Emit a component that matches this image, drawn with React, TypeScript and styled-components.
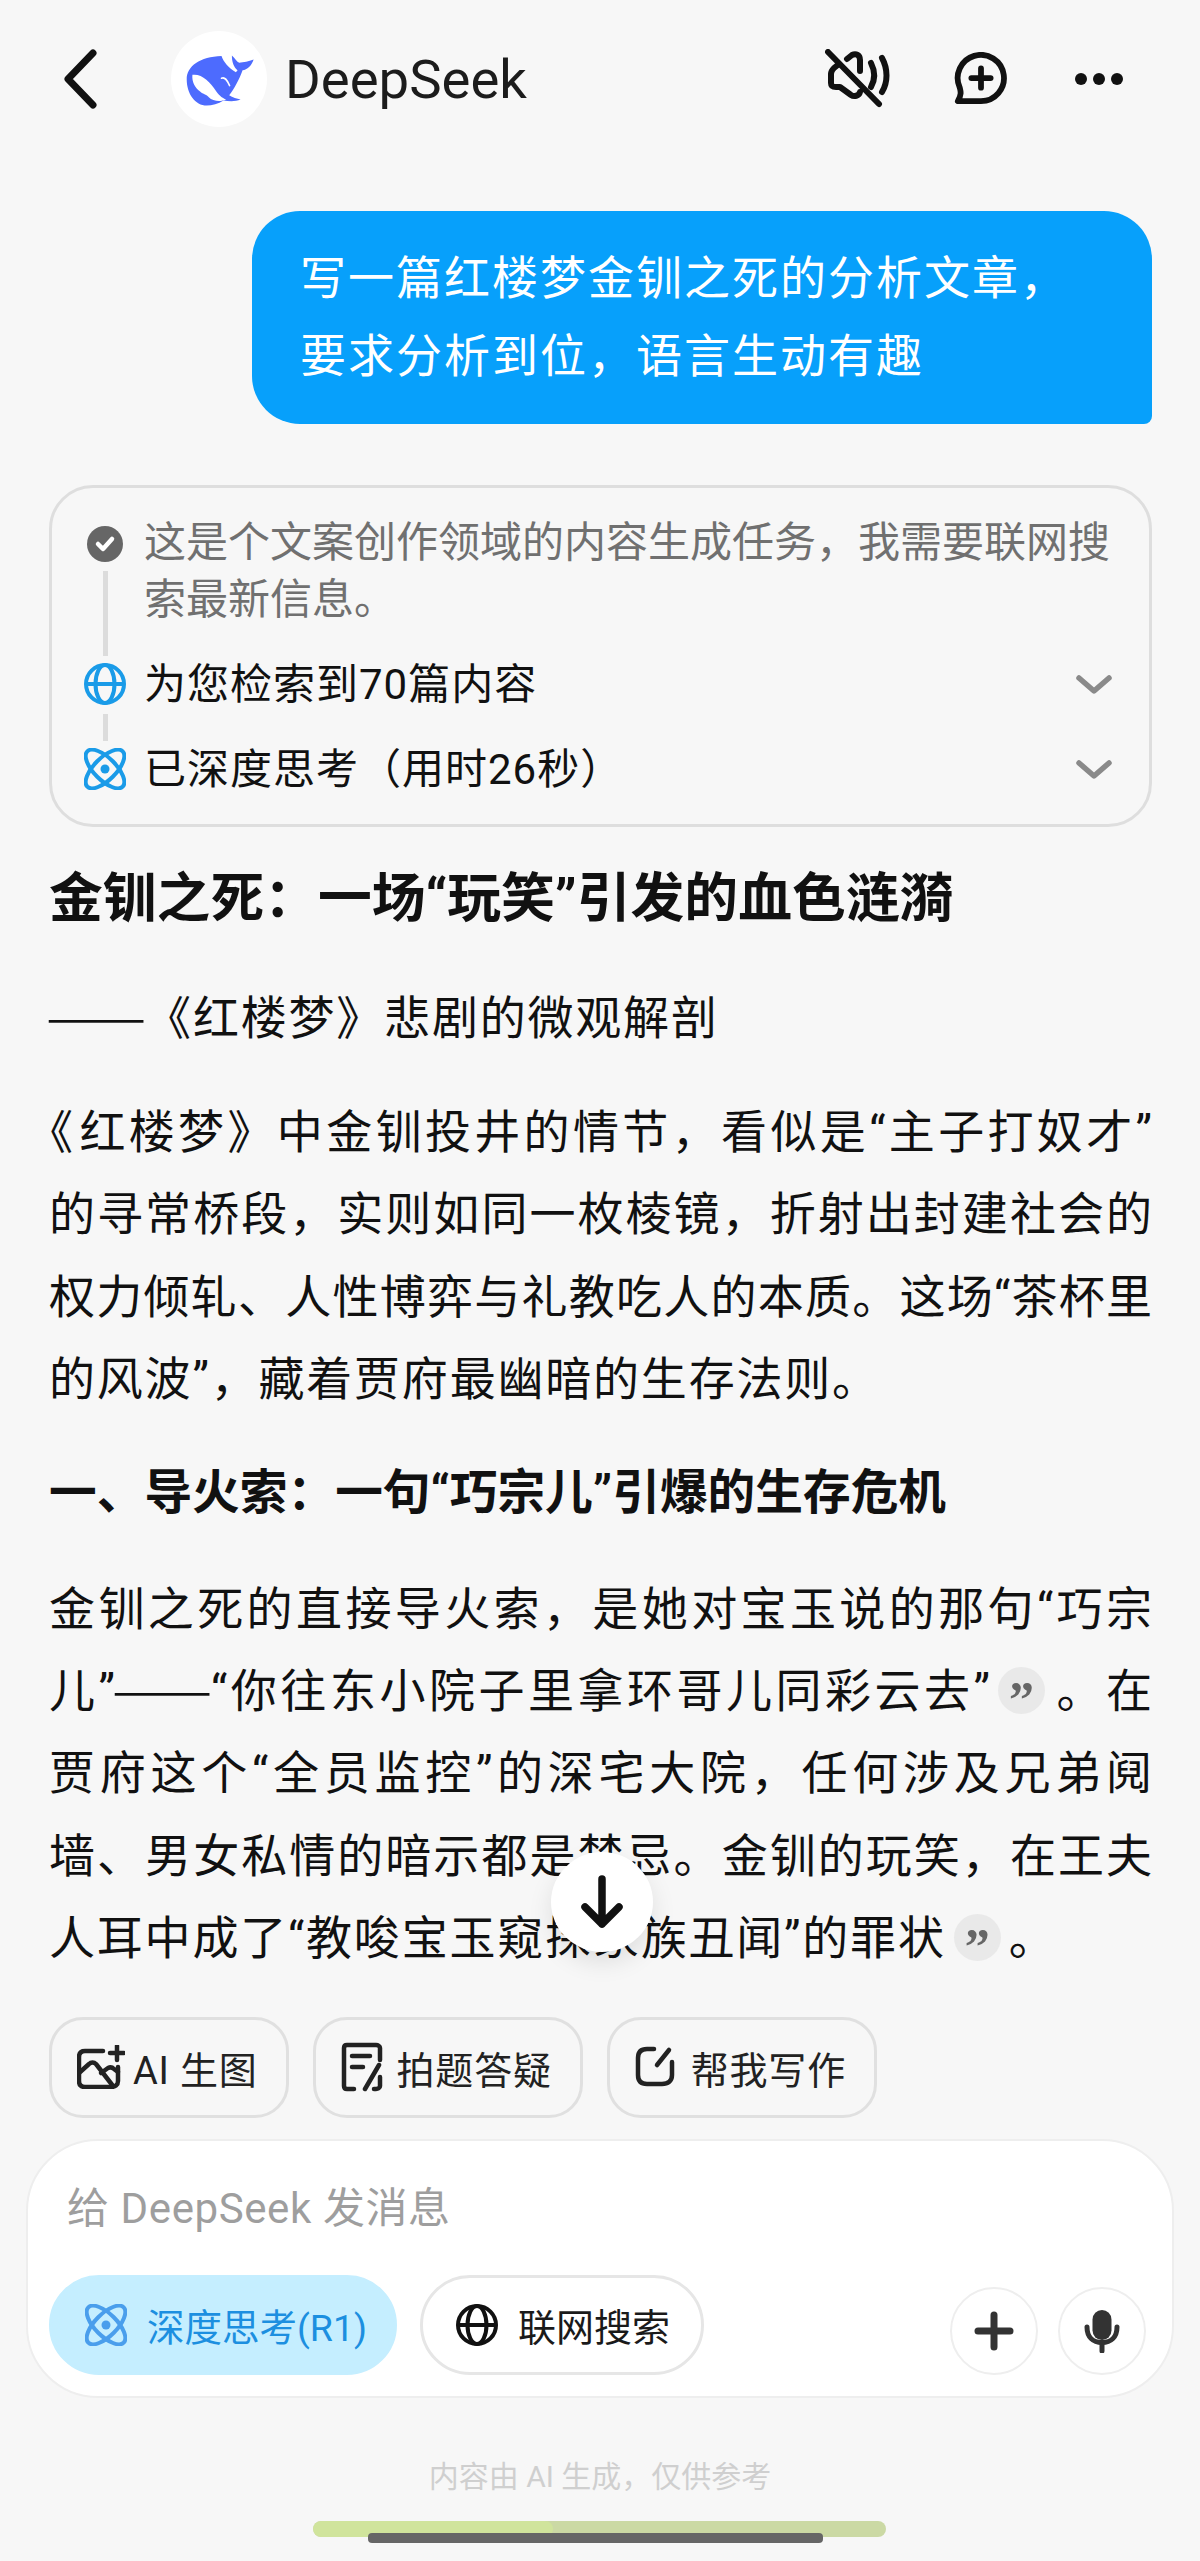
import React from "react";
import styled, { createGlobalStyle } from "styled-components";

const GlobalStyle = createGlobalStyle`
  html, body {
    margin: 0;
    padding: 0;
    background: #f7f7f7;
  }
  body {
    font-family: Roboto, "Noto Sans CJK SC", sans-serif;
    color: #111;
  }
  * {
    box-sizing: border-box;
  }
`;

function WhaleLogo() {
  return (
    <svg width="96" height="96" viewBox="333 33 287 287">
      <path
        fill="#4d6bfe"
        d="M380 178C380 138 420 110 484 108C490 125 505 145 527 156L532 150C520 140 515 125 515 106C525 115 530 125 537 128C550 125 565 125 580 118C575 135 560 150 547 150C537 178 522 205 507 225C517 232 530 235 541 238C525 245 505 243 490 241C475 251 455 256 440 256C405 256 380 220 380 178Z"
      />
      <path
        fill="#fff"
        d="M397 164C425 160 450 185 468 213C478 228 490 235 498 238C480 246 458 243 446 231C442 224 428 222 420 214C404 203 395 184 397 164Z"
      />
      <path fill="none" stroke="#fff" strokeWidth="5" strokeLinecap="round" d="M484 174C494 170 500 178 508 196" />
    </svg>
  );
}

function BackIcon() {
  return (
    <svg width="40" height="62" viewBox="0 0 40 62" fill="none">
      <path d="M33 5L8 31L33 57" stroke="#111" strokeWidth="7" strokeLinecap="round" strokeLinejoin="round" />
    </svg>
  );
}

function MuteIcon() {
  return (
    <svg width="68" height="60" viewBox="0 0 68 60" fill="none" stroke="#111" strokeWidth="6" strokeLinecap="round" strokeLinejoin="round">
      <path d="M14 15L9 19C7 21 6 23 6 25V34C6 37 8 38 11 38H15L26 46C29 48 34 47 35 43" />
      <path d="M22 10L27 6C31 4 35 6 35 11V22" />
      <path d="M46 14C50 22 50 31 46 38" />
      <path d="M57 9C63 20 63 33 57 43" />
      <path d="M3 3L54 55" />
    </svg>
  );
}

function ChatPlusIcon() {
  return (
    <svg width="54" height="54" viewBox="0 0 56 56" fill="none" stroke="#111" strokeLinecap="round" strokeLinejoin="round">
      <path strokeWidth="6" d="M4 51H28A24 24 0 1 0 6 37C7 41 8 44 4 51Z" />
      <path strokeWidth="6" d="M18 27H38M28 17V37" />
    </svg>
  );
}

function DotsIcon() {
  return (
    <svg width="50" height="14" viewBox="0 0 50 14" fill="#111">
      <circle cx="7" cy="7" r="6" />
      <circle cx="25" cy="7" r="6" />
      <circle cx="43" cy="7" r="6" />
    </svg>
  );
}

function CheckIcon() {
  return (
    <svg width="36" height="36" viewBox="0 0 36 36">
      <circle cx="18" cy="18" r="18" fill="#666" />
      <path d="M11 18L16 23L25 13" fill="none" stroke="#fff" strokeWidth="4.5" strokeLinecap="round" strokeLinejoin="round" />
    </svg>
  );
}

function GlobeIcon({ color }: { color: string }) {
  return (
    <svg width="42" height="42" viewBox="0 0 42 42" fill="none" stroke={color} strokeWidth="4">
      <circle cx="21" cy="21" r="19" />
      <ellipse cx="21" cy="21" rx="9.5" ry="19" />
      <path d="M2 21H40" />
    </svg>
  );
}

function AtomIcon({ color }: { color: string }) {
  return (
    <svg width="42" height="42" viewBox="0 0 42 42" fill="none" stroke={color} strokeWidth="4">
      <ellipse cx="21" cy="21" rx="11" ry="25" transform="rotate(45 21 21)" />
      <ellipse cx="21" cy="21" rx="11" ry="25" transform="rotate(-45 21 21)" />
      <circle cx="21" cy="21" r="4.5" fill={color} stroke="none" />
    </svg>
  );
}

function CaretIcon() {
  return (
    <svg width="40" height="24" viewBox="0 0 40 24" fill="none">
      <path d="M6 5L21 18L36 5" stroke="#8a8a8a" strokeWidth="5.5" strokeLinecap="round" strokeLinejoin="round" />
    </svg>
  );
}

function ArrowIcon() {
  return (
    <svg width="46" height="56" viewBox="0 0 46 56" fill="none">
      <path d="M23 5V50M6 33L23 50L40 33" stroke="#111" strokeWidth="7.5" strokeLinecap="round" strokeLinejoin="round" />
    </svg>
  );
}

function ImageSparkIcon() {
  return (
    <svg width="48" height="44" viewBox="0 0 48 44" fill="none" stroke="#222" strokeWidth="4.5" strokeLinecap="round" strokeLinejoin="round">
      <path d="M26 6H8C4 6 2 8 2 12V36C2 40 4 42 8 42H34C38 42 41 40 41 36V22" />
      <path d="M2 28L12 19C14 17 17 17 19 19L36 41" />
      <path d="M24 28L31 23C33 22 35 22 37 24L41 27" />
      <path d="M40 1V15M33 8H47" />
    </svg>
  );
}

function QuizIcon() {
  return (
    <svg width="42" height="50" viewBox="0 0 42 50" fill="none" stroke="#222" strokeWidth="4.5" strokeLinecap="round" strokeLinejoin="round">
      <path d="M39 18V6C39 4 37 3 35 3H6C4 3 3 4 3 6V44C3 46 4 47 6 47H13" />
      <path d="M11 14H29M11 25H22" />
      <path d="M38 23L24 47" />
      <path d="M39 35V44C39 46 37 47 35 47H33" />
    </svg>
  );
}

function WriteIcon() {
  return (
    <svg width="40" height="42" viewBox="0 0 40 42" fill="none" stroke="#222" strokeWidth="4.5" strokeLinecap="round" strokeLinejoin="round">
      <path d="M19 3H12C6 3 3 6 3 12V29C3 35 6 38 12 38H27C33 38 37 35 37 29V16" />
      <path d="M34 4L22 19" />
    </svg>
  );
}

function MicIcon() {
  return (
    <svg width="36" height="44" viewBox="0 0 36 44">
      <rect x="8.5" y="1" width="19" height="30" rx="9.5" fill="#333" />
      <path d="M3 18C3 28 9 33.5 18 33.5C27 33.5 33 28 33 18" fill="none" stroke="#333" strokeWidth="5" strokeLinecap="round" />
      <path d="M18 33V42" stroke="#333" strokeWidth="5" strokeLinecap="round" />
    </svg>
  );
}

function PlusIcon() {
  return (
    <svg width="40" height="40" viewBox="0 0 40 40" fill="none">
      <path d="M20 4V36M4 20H36" stroke="#333" strokeWidth="7" strokeLinecap="round" />
    </svg>
  );
}

export default function App() {
  return (
    <Page>
      <GlobalStyle />
      <Header>
        <BackSlot>
          <BackIcon />
        </BackSlot>
        <Avatar>
          <WhaleLogo />
        </Avatar>
        <BotName>DeepSeek</BotName>
        <HeaderActions>
          <MuteIcon />
          <ChatSlot>
            <ChatPlusIcon />
          </ChatSlot>
          <DotsIcon />
        </HeaderActions>
      </Header>

      <Thread>
        <UserBubble>
          写一篇红楼梦金钏之死的分析文章，
          <br />
          要求分析到位，语言生动有趣
        </UserBubble>

        <StepsCard>
          <Step>
            <Rail>
              <RailIcon $top={12}>
                <CheckIcon />
              </RailIcon>
              <Connector />
            </Rail>
            <StepNote>这是个文案创作领域的内容生成任务，我需要联网搜索最新信息。</StepNote>
          </Step>
          <Step>
            <Rail>
              <RailIcon $top={7}>
                <GlobeIcon color="#1a9be8" />
              </RailIcon>
              <Connector />
            </Rail>
            <StepTitle>为您检索到70篇内容</StepTitle>
            <Caret>
              <CaretIcon />
            </Caret>
          </Step>
          <Step $last>
            <Rail>
              <RailIcon $top={7}>
                <AtomIcon color="#1a9be8" />
              </RailIcon>
            </Rail>
            <StepTitle>已深度思考（用时26秒）</StepTitle>
            <Caret>
              <CaretIcon />
            </Caret>
          </Step>
        </StepsCard>

        <Article>
          <ArticleTitle>金钏之死：一场“玩笑”引发的血色涟漪</ArticleTitle>
          <Subtitle>
            <Dash>——</Dash>《红楼梦》悲剧的微观解剖
          </Subtitle>
          <Paragraph $top={40}>
            <Line>
              <LeadBracket>《</LeadBracket>红楼梦》中金钏投井的情节，看似是“主子打奴才”
            </Line>
            <Line>的寻常桥段，实则如同一枚棱镜，折射出封建社会的</Line>
            <Line>权力倾轧、人性博弈与礼教吃人的本质。这场“茶杯里</Line>
            <Line $last>的风波”，藏着贾府最幽暗的生存法则。</Line>
          </Paragraph>
          <SectionTitle>一、导火索：一句“巧宗儿”引爆的生存危机</SectionTitle>
          <Paragraph $top={38}>
            <Line>金钏之死的直接导火索，是她对宝玉说的那句“巧宗</Line>
            <Line>
              儿”<Dash>——</Dash>“你往东小院子里拿环哥儿同彩云去”<Citation>”</Citation>。在
            </Line>
            <Line>贾府这个“全员监控”的深宅大院，任何涉及兄弟阋</Line>
            <Line>墙、男女私情的暗示都是禁忌。金钏的玩笑，在王夫</Line>
            <Line $last>
              人耳中成了“教唆宝玉窥探家族丑闻”的罪状<Citation>”</Citation>。
            </Line>
          </Paragraph>
          <ScrollButton>
            <ArrowIcon />
          </ScrollButton>
        </Article>
      </Thread>

      <Shortcuts>
        <Shortcut $gap={8}>
          <ImageSparkIcon />
          AI 生图
        </Shortcut>
        <Shortcut $gap={14}>
          <QuizIcon />
          拍题答疑
        </Shortcut>
        <Shortcut $gap={16}>
          <WriteIcon />
          帮我写作
        </Shortcut>
      </Shortcuts>

      <Composer>
        <Placeholder>给 DeepSeek 发消息</Placeholder>
        <ComposerRow>
          <ModeButton $active>
            <AtomIcon color="#4a9eec" />
            深度思考(R1)
          </ModeButton>
          <ModeButton>
            <GlobeIcon color="#111" />
            联网搜索
          </ModeButton>
          <RoundActions>
            <RoundButton>
              <PlusIcon />
            </RoundButton>
            <RoundButton>
              <MicIcon />
            </RoundButton>
          </RoundActions>
        </ComposerRow>
      </Composer>

      <Disclaimer>内容由 AI 生成，仅供参考</Disclaimer>

      <HomeArea>
        <HomeTrack>
          <HomeProgress />
        </HomeTrack>
        <HomeBar />
      </HomeArea>
    </Page>
  );
}

const Page = styled.div`
  width: 1200px;
  height: 2561px;
  overflow: hidden;
  background: #f7f7f7;
`;

const Header = styled.header`
  display: flex;
  align-items: center;
  height: 158px;
  padding: 0 76px 0 60px;
`;

const BackSlot = styled.div`
  display: flex;
  width: 111px;
`;

const Avatar = styled.div`
  display: flex;
  flex-shrink: 0;
  width: 96px;
  height: 96px;
  border-radius: 50%;
  background: #fff;
`;

const BotName = styled.div`
  margin-left: 18px;
  font-size: 54.5px;
  color: #1c1c1c;
`;

const HeaderActions = styled.div`
  display: flex;
  align-items: center;
  gap: 61px;
  margin-left: auto;
`;

const ChatSlot = styled.div`
  display: flex;
  margin-right: 5px;
`;

const Thread = styled.main`
  display: flex;
  flex-direction: column;
  padding: 53px 48px 0 49px;
`;

const UserBubble = styled.div`
  align-self: flex-end;
  width: 900px;
  height: 213px;
  padding: 28px 48px;
  border-radius: 48px 48px 8px 48px;
  background: #07a0fb;
  color: #fff;
  font-size: 46px;
  line-height: 78px;
  letter-spacing: 2px;
  white-space: nowrap;
`;

const StepsCard = styled.section`
  margin-top: 61px;
  padding: 26px 36px 25px 32px;
  border: 3px solid #dedede;
  border-radius: 44px;
`;

const Step = styled.div<{ $last?: boolean }>`
  display: grid;
  grid-template-columns: 42px 1fr auto;
  column-gap: 18px;
  margin-bottom: ${(p) => (p.$last ? 0 : 28)}px;
`;

const Rail = styled.div`
  display: flex;
  flex-direction: column;
  align-items: center;
`;

const RailIcon = styled.div<{ $top: number }>`
  display: flex;
  margin: ${(p) => p.$top}px 0 9px;
`;

const Connector = styled.div`
  flex: 1;
  width: 5px;
  margin-bottom: -28px;
  background: #dcdcdc;
`;

const StepNote = styled.div`
  grid-column: 2 / 4;
  font-size: 42px;
  line-height: 57px;
  color: #707070;
`;

const StepTitle = styled.div`
  font-size: 42px;
  line-height: 57px;
  letter-spacing: 1px;
  color: #111;
`;

const Caret = styled.div`
  display: flex;
  align-items: center;
`;

const Article = styled.article`
  position: relative;
  margin-top: 34px;
`;

const ArticleTitle = styled.h1`
  margin: 0;
  font-size: 53.8px;
  line-height: 76px;
  font-weight: 700;
`;

const Subtitle = styled.div`
  margin-top: 39px;
  font-family: "Noto Sans CJK SC", sans-serif;
  font-size: 46px;
  line-height: 76px;
  letter-spacing: 1.8px;
`;

const Paragraph = styled.div<{ $top: number }>`
  margin-top: ${(p) => p.$top}px;
`;

const Line = styled.div<{ $last?: boolean }>`
  height: 82.4px;
  font-size: 46px;
  line-height: 81.5px;
  white-space: nowrap;
  letter-spacing: ${(p) => (p.$last ? "1.8px" : "0")};
  text-align: justify;
  text-align-last: ${(p) => (p.$last ? "left" : "justify")};
  text-justify: inter-character;
`;

const LeadBracket = styled.span`
  margin: 0 3px 0 1px;
  font-feature-settings: "halt";
`;

const Dash = styled.span`
  display: inline-block;
  margin: 0 22px 0 -3px;
  font-family: "Noto Sans CJK SC", sans-serif;
  line-height: 1;
  letter-spacing: 0;
  transform: scaleX(1.3);
  transform-origin: left center;
`;

const SectionTitle = styled.h2`
  margin: 33px 0 0;
  font-size: 47.7px;
  line-height: 76px;
  font-weight: 700;
`;

const Citation = styled.span`
  display: inline-block;
  width: 47px;
  height: 47px;
  margin: 16px 8px 0;
  border-radius: 50%;
  background: #e9e9e9;
  color: #666;
  font-family: "Liberation Serif", serif;
  font-size: 50px;
  font-weight: 700;
  line-height: 65px;
  text-align: center;
  text-align-last: center;
  vertical-align: top;
  letter-spacing: 0;
`;

const ScrollButton = styled.div`
  position: absolute;
  left: 502px;
  top: 991px;
  display: flex;
  align-items: center;
  justify-content: center;
  width: 102px;
  height: 100px;
  border-radius: 50%;
  background: #fff;
  box-shadow: 0 10px 24px rgba(0, 0, 0, 0.1);
`;

const Shortcuts = styled.div`
  display: flex;
  gap: 24px;
  margin-top: 36px;
  padding-left: 49px;
`;

const Shortcut = styled.div<{ $gap: number }>`
  display: flex;
  align-items: center;
  gap: ${(p) => p.$gap}px;
  height: 101px;
  padding: 0 28px 0 25px;
  border: 3px solid #e0e0e0;
  border-radius: 34px;
  font-size: 38px;
  letter-spacing: 0.8px;
  color: #222;
`;

const Composer = styled.section`
  margin: 21px 26px 0;
  height: 259px;
  padding: 40px 26px 0 21px;
  border: 2px solid #eeeeee;
  border-radius: 72px;
  background: #fff;
`;

const Placeholder = styled.div`
  padding-left: 18px;
  font-size: 42px;
  line-height: 56px;
  color: #9e9e9e;
  letter-spacing: 0.6px;
`;

const ComposerRow = styled.div`
  display: flex;
  align-items: flex-end;
  gap: 23px;
  margin-top: 38px;
`;

const ModeButton = styled.div<{ $active?: boolean }>`
  display: flex;
  align-items: center;
  gap: 20px;
  height: 100px;
  padding: 0 ${(p) => (p.$active ? 27 : 31)}px 0 33px;
  border-radius: 50px;
  border: 3px solid ${(p) => (p.$active ? "#c5eeff" : "#e6e6e6")};
  background: ${(p) => (p.$active ? "#c5eeff" : "#fff")};
  color: ${(p) => (p.$active ? "#1c8fe0" : "#1a1a1a")};
  font-size: ${(p) => (p.$active ? 37.5 : 38)}px;
`;

const RoundActions = styled.div`
  display: flex;
  gap: 20px;
  margin-left: auto;
`;

const RoundButton = styled.div`
  display: flex;
  align-items: center;
  justify-content: center;
  width: 88px;
  height: 88px;
  border: 2px solid #eeeeee;
  border-radius: 50%;
  background: #fff;
`;

const Disclaimer = styled.div`
  margin-top: 59px;
  text-align: center;
  font-size: 30px;
  line-height: 40px;
  color: #cfcfcf;
`;

const HomeArea = styled.div`
  position: relative;
  width: 573px;
  margin: 24px 0 0 313px;
`;

const HomeTrack = styled.div`
  height: 16px;
  border-radius: 8px;
  background: #cbd9a4;
  overflow: hidden;
`;

const HomeProgress = styled.div`
  width: 240px;
  height: 16px;
  border-radius: 8px;
  background: #d0e49c;
`;

const HomeBar = styled.div`
  position: absolute;
  left: 55px;
  top: 12px;
  width: 455px;
  height: 10px;
  border-radius: 4px;
  background: #666;
`;
